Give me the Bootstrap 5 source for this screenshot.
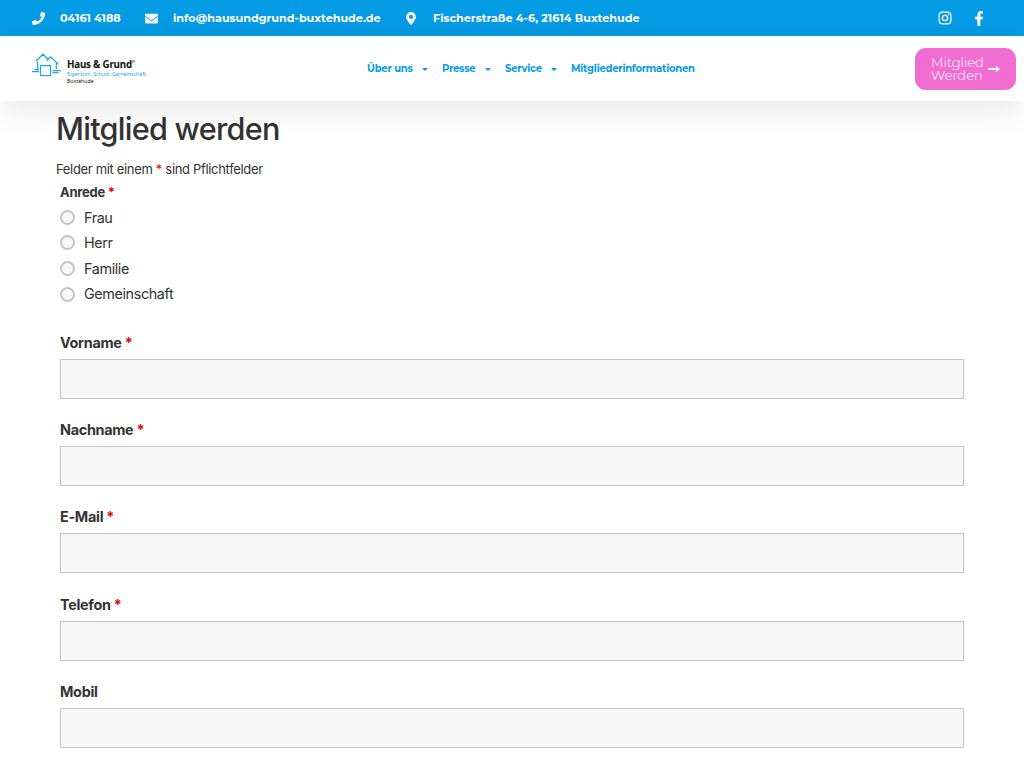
<!DOCTYPE html>
<html lang="de">
<head>
<meta charset="utf-8">
<meta name="viewport" content="width=device-width, initial-scale=1">
<title>Mitglied werden – Haus &amp; Grund Buxtehude</title>
<link rel="stylesheet" href="https://cdn.jsdelivr.net/npm/bootstrap@5.3.0/dist/css/bootstrap.min.css">
<style>
body{font-family:Inter,"Liberation Sans",sans-serif;color:#333;background:#fff;height:768px;overflow:hidden}
.topbar{height:36px;background:#059ce6;color:#fff;font-family:Montserrat,Inter,sans-serif;font-size:11.2px;font-weight:700;padding:0 40px 0 32px;line-height:36px}
.topbar svg,.cta svg{fill:currentColor;flex:none}
.topbar a,.mainnav a,.cta{color:inherit;text-decoration:none;white-space:nowrap}
.contact svg{margin-top:1px}
.c-phone{width:113px}.c-mail{width:261px}
.mainbar{height:65.4px;padding:0 8px 0 32px;box-shadow:0 6px 34px rgba(0,0,0,.11);background:#fff;position:relative}
.brand{width:335px;color:#111;font-family:"Noto Sans","Open Sans",sans-serif}
.brand-text{line-height:1;padding:10px 0 0 6px;white-space:nowrap}
.brand-name{font-size:9.8px;font-weight:700;line-height:10px;letter-spacing:-.22px}
.brand-name sup{font-size:4px;top:-5px}
.brand-claim{font-size:5.2px;line-height:8px;color:#1ba6e5}
.brand-town{font-size:5.2px;line-height:7px}
.mainnav{color:#059ce6;font-family:Montserrat,Inter,sans-serif;font-size:10px;font-weight:700;line-height:14px;padding-top:1px;letter-spacing:-.22px}
.mainnav .tri{width:0;border:3px solid transparent;border-top-color:currentColor;border-bottom:0;margin-right:14px}
.cta{width:101px;height:42px;border-radius:11px;background:#f06ed2;color:#fff;font-family:Montserrat,Inter,sans-serif;font-size:13px;font-weight:400;line-height:13px}
.page{padding:0 60px}
h1{font-size:30.6px;font-weight:500;line-height:36px;margin:9.4px 0 0 -4px;letter-spacing:-.73px}
.hint{font-size:13px;line-height:20px;margin:12px 0 0 -4px;letter-spacing:-.33px}
.req{color:#e80000}
.group-title{font-size:13px;font-weight:700;line-height:20px;margin:3px 0 2.8px;letter-spacing:-.25px}
.form-check{min-height:0;height:25.6px;margin:0;padding:0;display:flex;align-items:center;font-size:14.4px;letter-spacing:-.4px}
.form-check .form-check-input{float:none;margin:0 9px 0 0;width:15px;height:15px;border:2px solid #c4c4c4;background-color:#f7f7f7}
.field{height:87.2px}
.field .form-label{display:block;font-size:14.4px;font-weight:700;line-height:20px;margin:0 0 6px;letter-spacing:-.3px}
.field .form-control{height:40px;background:#f7f7f7;border:1px solid #c4c4c4;border-radius:0}
</style>
</head>
<body>
<header>
<div class="topbar d-flex align-items-center">
  <a class="contact c-phone d-flex align-items-center" href="#"><svg width="13" height="13" viewBox="0 0 512 512"><path d="M493 25 389 1c-11-3-23 3-27 14l-48 112c-4 10-1 21 7 28l60 50a371 371 0 0 1-177 177l-50-60c-7-8-18-11-28-7L14 363c-11 4-16 15-14 27l24 104c3 11 13 18 24 18 256 0 464-207 464-464 0-11-8-21-19-23z"/></svg><span style="margin-left:15px">04161 4188</span></a>
  <a class="contact c-mail d-flex align-items-center" href="#"><svg width="13" height="13" viewBox="0 0 512 512"><path d="M502 191c4-3 10 0 10 5v204c0 27-21 48-48 48H48c-26 0-48-21-48-48V196c0-5 6-8 10-5 22 17 52 40 154 114 21 15 57 48 92 48s72-33 92-48c102-74 132-97 154-114zM256 320c23 0 57-29 73-41 133-96 143-105 174-129 6-4 9-11 9-19v-19c0-26-21-48-48-48H48C22 64 0 86 0 112v19c0 8 3 14 9 19 31 24 41 33 174 129 16 12 50 41 73 41z"/></svg><span style="margin-left:15px">info@hausundgrund-buxtehude.de</span></a>
  <a class="contact d-flex align-items-center" href="#"><svg width="10" height="13" viewBox="0 0 384 512"><path d="M172 502C27 291 0 269 0 192a192 192 0 1 1 384 0c0 77-27 99-172 310-10 13-30 13-40 0zm20-230a80 80 0 1 0 0-160 80 80 0 0 0 0 160z"/></svg><span style="margin-left:17px">Fischerstraße 4-6, 21614 Buxtehude</span></a>
  <div class="d-flex align-items-center ms-auto">
    <a class="d-flex" href="#" aria-label="Instagram"><svg width="14" height="14" viewBox="0 0 14 14"><rect x="1.100" y="1.100" width="11.800" height="11.800" rx="3.400" fill="none" stroke="currentColor" stroke-width="1.200"/><circle cx="7" cy="7" r="2.700" fill="none" stroke="currentColor" stroke-width="1.200"/><circle cx="10.400" cy="3.600" r=".8"/></svg></a>
    <a class="d-flex" style="margin-left:22px" href="#" aria-label="Facebook"><svg width="10" height="15" viewBox="0 0 320 512"><path d="m279 288 14-93h-89v-60c0-25 13-50 53-50h40V7s-37-7-72-7c-73 0-121 44-121 125v70H23v93h81v224h100V288z"/></svg></a>
  </div>
</div>
<nav class="mainbar d-flex align-items-center">
  <a class="brand d-flex align-self-start text-decoration-none" href="#" style="padding-top:14px">
    <svg width="29" height="28" viewBox="0 0 29 28" fill="none" stroke="#1fa8ea" stroke-width="1.250"><path d="m4 11 7-6.800 5.600 5.500M14.600 10.700l4.100-3.800 7.700 7.500M5.700 11.500V19M24.300 13.300V19M2.500 19.500H7M0 21.500h7M20.500 20.500H29M20.500 22.500h6"/><path d="M8.500 15.500h10v10h-10z"/></svg>
    <div class="brand-text"><div class="brand-name">Haus &amp; Grund<sup>®</sup></div><div class="brand-claim">Eigentum. Schutz. Gemeinschaft.</div><div class="brand-town">Buxtehude</div></div>
  </a>
  <div class="mainnav d-flex align-items-center">
    <a class="d-flex align-items-center justify-content-between" style="width:75px" href="#">Über uns<i class="tri"></i></a>
    <a class="d-flex align-items-center justify-content-between" style="width:63px" href="#">Presse<i class="tri"></i></a>
    <a class="d-flex align-items-center justify-content-between" style="width:66px" href="#">Service<i class="tri"></i></a>
    <a href="#">Mitgliederinformationen</a>
  </div>
  <a class="cta d-flex align-items-center justify-content-center ms-auto" href="#"><span class="fw-light">Mitglied<br>Werden</span><svg width="12" height="8" viewBox="0 0 12 8" style="margin-left:4px"><path d="M0 3h8V.8L12 4 8 7.200V5H0z"/></svg></a>
</nav>
</header>
<main class="page">
  <h1>Mitglied werden</h1>
  <p class="hint">Felder mit einem <span class="req">*</span> sind Pflichtfelder</p>
  <form>
    <div class="group-title">Anrede <span class="req">*</span></div>
    <label class="form-check"><input class="form-check-input" type="radio" name="anrede">Frau</label>
    <label class="form-check"><input class="form-check-input" type="radio" name="anrede">Herr</label>
    <label class="form-check"><input class="form-check-input" type="radio" name="anrede">Familie</label>
    <label class="form-check"><input class="form-check-input" type="radio" name="anrede">Gemeinschaft</label>
    <div style="padding-top:26px">
      <div class="field"><label class="form-label" for="vn">Vorname <span class="req">*</span></label><input class="form-control" id="vn"></div>
      <div class="field"><label class="form-label" for="nn">Nachname <span class="req">*</span></label><input class="form-control" id="nn"></div>
      <div class="field"><label class="form-label" for="em">E-Mail <span class="req">*</span></label><input class="form-control" id="em"></div>
      <div class="field"><label class="form-label" for="tel">Telefon <span class="req">*</span></label><input class="form-control" id="tel"></div>
      <div class="field"><label class="form-label" for="mob">Mobil</label><input class="form-control" id="mob"></div>
    </div>
  </form>
</main>
<script src="https://cdn.jsdelivr.net/npm/bootstrap@5.3.0/dist/js/bootstrap.bundle.min.js"></script>
</body>
</html>
